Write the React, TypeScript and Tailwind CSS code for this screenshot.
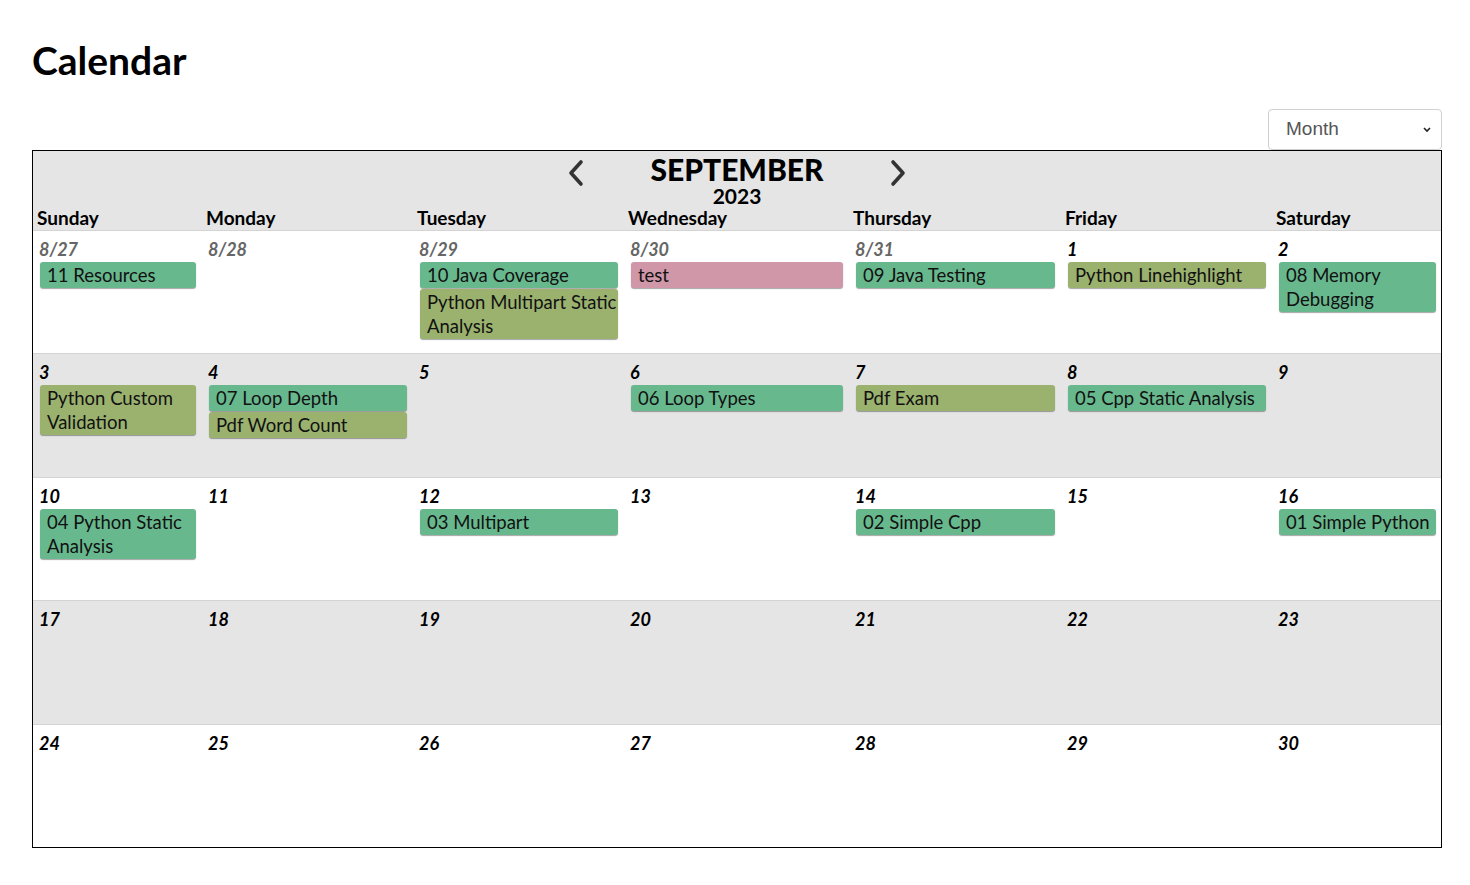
import React from 'react';

type Ev = { title: string; color: 'green' | 'olive' | 'pink' };
type Day = { label: string; muted?: boolean; events: Ev[] };

const colorClass = {
  green: 'bg-[#68b88e]',
  olive: 'bg-[#9bb26f]',
  pink: 'bg-[#d097a8]',
};

const dayNames = ['Sunday', 'Monday', 'Tuesday', 'Wednesday', 'Thursday', 'Friday', 'Saturday'];

const weeks: Day[][] = [
  [
    { label: '8/27', muted: true, events: [{ title: '11 Resources', color: 'green' }] },
    { label: '8/28', muted: true, events: [] },
    {
      label: '8/29',
      muted: true,
      events: [
        { title: '10 Java Coverage', color: 'green' },
        { title: 'Python Multipart Static Analysis', color: 'olive' },
      ],
    },
    { label: '8/30', muted: true, events: [{ title: 'test', color: 'pink' }] },
    { label: '8/31', muted: true, events: [{ title: '09 Java Testing', color: 'green' }] },
    { label: '1', events: [{ title: 'Python Linehighlight', color: 'olive' }] },
    { label: '2', events: [{ title: '08 Memory Debugging', color: 'green' }] },
  ],
  [
    { label: '3', events: [{ title: 'Python Custom Validation', color: 'olive' }] },
    {
      label: '4',
      events: [
        { title: '07 Loop Depth', color: 'green' },
        { title: 'Pdf Word Count', color: 'olive' },
      ],
    },
    { label: '5', events: [] },
    { label: '6', events: [{ title: '06 Loop Types', color: 'green' }] },
    { label: '7', events: [{ title: 'Pdf Exam', color: 'olive' }] },
    { label: '8', events: [{ title: '05 Cpp Static Analysis', color: 'green' }] },
    { label: '9', events: [] },
  ],
  [
    { label: '10', events: [{ title: '04 Python Static Analysis', color: 'green' }] },
    { label: '11', events: [] },
    { label: '12', events: [{ title: '03 Multipart', color: 'green' }] },
    { label: '13', events: [] },
    { label: '14', events: [{ title: '02 Simple Cpp', color: 'green' }] },
    { label: '15', events: [] },
    { label: '16', events: [{ title: '01 Simple Python', color: 'green' }] },
  ],
  ['17', '18', '19', '20', '21', '22', '23'].map((l) => ({ label: l, events: [] })),
  ['24', '25', '26', '27', '28', '29', '30'].map((l) => ({ label: l, events: [] })),
];

const cols = 'grid grid-cols-[169px_211px_211px_225px_212px_211px_166px] pl-[3px]';

function Chevron({ dir }: { dir: 'left' | 'right' }) {
  return (
    <svg width="20" height="28" viewBox="0 0 20 28" className="text-[#333]">
      <polyline
        points={dir === 'left' ? '15,3 5,14 15,25' : '5,3 15,14 5,25'}
        fill="none"
        stroke="currentColor"
        strokeWidth="3.6"
        strokeLinecap="round"
        strokeLinejoin="round"
      />
    </svg>
  );
}

function Cell({ day, last }: { day: Day; last: boolean }) {
  return (
    <div className={last ? 'pt-[7px] pr-[5px]' : 'pt-[7px] pr-[9px]'}>
      <div
        className={`pl-[3px] text-[18px] leading-[22px] font-bold italic ${
          day.muted ? 'text-[#666]' : 'text-black'
        }`}
      >
        {day.label}
      </div>
      <div className="mt-[2px] pl-[4px]">
        {day.events.map((e) => (
          <div
            key={e.title}
            className={`${colorClass[e.color]} mb-[1px] rounded-[3px] py-[1px] pl-[7px] text-[18.5px] leading-[24px] text-[#111] shadow-[0_1px_1px_rgba(0,0,0,0.35)]`}
          >
            {e.title}
          </div>
        ))}
      </div>
    </div>
  );
}

export default function App() {
  return (
    <div className="min-h-[885px] bg-white font-['Lato',sans-serif] text-black">
      <div className="ml-[32px] w-[1410px] pt-[38px]">
        <h1 className="text-[39px] leading-[44px] font-bold">Calendar</h1>

        <div className="mt-[27px] flex justify-end">
          <div className="flex h-[41px] w-[174px] items-center justify-between rounded-[4px] border border-[#d0d0d0] pl-[17px] pr-[9px] font-['Liberation_Sans',sans-serif] text-[19px] text-[#555]">
            <span>Month</span>
            <svg width="10" height="8" viewBox="0 0 10 8">
              <polyline points="2,2 5,5 8,2" fill="none" stroke="#222" strokeWidth="1.6" />
            </svg>
          </div>
        </div>

        <div className="border-x border-b border-black">
          <div className="border-t border-black bg-[#e5e5e5] pt-[2px] pb-[1px]">
            <div className="flex justify-center">
              <div className="flex w-[362px] items-start">
                <div className="flex w-[40px] justify-center pt-[6px]">
                  <Chevron dir="left" />
                </div>
                <div className="flex-1 text-center">
                  <div className="text-[30px] leading-[32px] font-black">SEPTEMBER</div>
                  <div className="text-[21px] leading-[22px] font-bold">2023</div>
                </div>
                <div className="flex w-[40px] justify-center pt-[6px]">
                  <Chevron dir="right" />
                </div>
              </div>
            </div>
            <div className={cols}>
              {dayNames.map((d) => (
                <div key={d} className="pl-[1px] text-[19px] leading-[22px] font-bold">
                  {d}
                </div>
              ))}
            </div>
          </div>

          {weeks.map((week, wi) => (
            <div
              key={wi}
              className={`${cols} border-t border-[#d4d4d4] ${wi % 2 === 1 ? 'h-[124px] bg-[#e5e5e5]' : 'h-[123px] bg-white'}`}
            >
              {week.map((day, di) => (
                <Cell key={di} day={day} last={di === 6} />
              ))}
            </div>
          ))}
        </div>
      </div>
    </div>
  );
}
